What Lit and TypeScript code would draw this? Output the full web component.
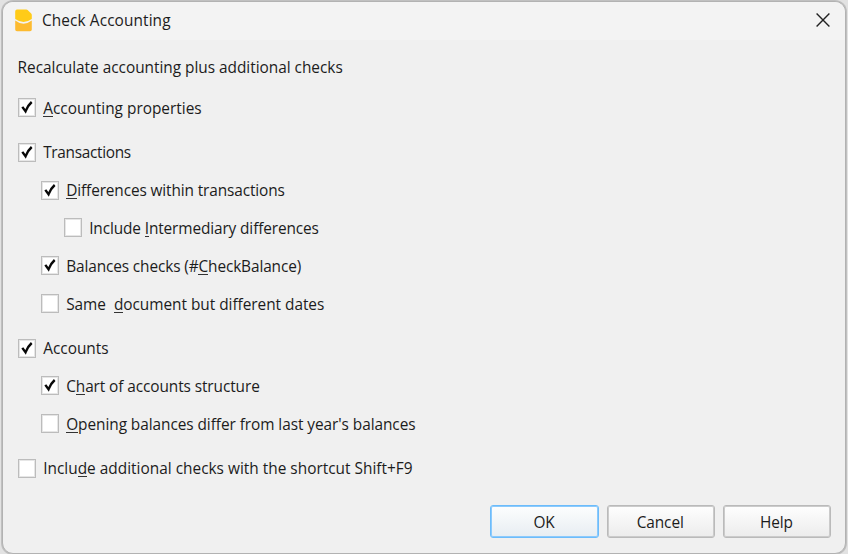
import { LitElement, html, css, svg, nothing } from "lit";
import { customElement, property } from "lit/decorators.js";
import { classMap } from "lit/directives/class-map.js";

const family = css`"Open Sans", "Noto Sans", sans-serif`;

interface Option {
  level: number;
  checked: boolean;
  before: string;
  key: string;
  after: string;
  spacing: number;
  group?: boolean;
}

const options: Option[] = [
  { level: 0, checked: true, before: "", key: "A", after: "ccounting properties", spacing: 0 },
  { level: 0, checked: true, before: "Transactions", key: "", after: "", spacing: -0.32, group: true },
  { level: 1, checked: true, before: "", key: "D", after: "ifferences within transactions", spacing: -0.12 },
  { level: 2, checked: false, before: "Include ", key: "I", after: "ntermediary differences", spacing: -0.12 },
  { level: 1, checked: true, before: "Balances checks (#", key: "C", after: "heckBalance)", spacing: -0.12 },
  { level: 1, checked: false, before: "Same  ", key: "d", after: "ocument but different dates", spacing: -0.03 },
  { level: 0, checked: true, before: "Accounts", key: "", after: "", spacing: 0, group: true },
  { level: 1, checked: true, before: "C", key: "h", after: "art of accounts structure", spacing: -0.09 },
  { level: 1, checked: false, before: "", key: "O", after: "pening balances differ from last year's balances", spacing: -0.06 },
  { level: 0, checked: false, before: "Inclu", key: "d", after: "e additional checks with the shortcut Shift+F9", spacing: 0.01, group: true },
];

@customElement("check-option")
class CheckOption extends LitElement {
  @property({ attribute: false }) option!: Option;

  static styles = css`
    :host { display: block; }
    .row { display: flex; align-items: center; height: 37.85px; font: 15.4px/20px ${family}; color: #1c1c1c; }
    .group { margin-top: 6.6px; }
    .level1 { padding-left: 23px; }
    .level2 { padding-left: 46px; }
    .box { box-sizing: border-box; width: 18px; height: 19px; flex: none; background: #fff; border: 1px solid #bcbcbc; box-shadow: inset 0 0 0 1px #e6e6e6; margin-right: 7.6px; }
    .box svg { display: block; width: 16px; height: 17px; }
    .label { white-space: pre; padding-top: 2px; }
    .key { border-bottom: 1px solid #333; display: inline-block; height: 17px; line-height: 20px; }
  `;

  render() {
    const o = this.option;
    return html`<div class=${classMap({ row: true, group: !!o.group, level1: o.level === 1, level2: o.level === 2 })}>
      <span class="box">${o.checked
        ? svg`<svg viewBox="0 0 16 17"><path d="M3.3 7.9 L6.5 12.3 C7.8 8.7 9.8 5.6 12.7 3" fill="none" stroke="#080808" stroke-width="2.4"/></svg>`
        : nothing}</span><span class="label" style="letter-spacing:${o.spacing}px">${o.before}${o.key ? html`<span class="key">${o.key}</span>` : nothing}${o.after}</span>
    </div>`;
  }
}

@customElement("app-root")
class AppRoot extends LitElement {
  static styles = css`
    :host { display: block; width: 848px; height: 554px; overflow: hidden; background: #e2e2e2; }
    .window { box-sizing: border-box; width: 844px; height: 553px; margin-left: 2px; border: 1px solid #b2b2b2; box-shadow: 0 0 0 1px #c0c0c0; border-radius: 11px; background: #f0f0f0; overflow: hidden; display: flex; flex-direction: column; font: 15.4px/20px ${family}; color: #1c1c1c; transform: translateY(1px); }
    .bar { height: 38px; flex: none; display: flex; align-items: center; padding: 0 14px 0 12px; background: #f3f3f3; }
    .logo { width: 17px; height: 23px; margin: 0 10px 2px 0; }
    .title { flex: 1; letter-spacing: .1px; }
    .close { width: 16px; height: 16px; margin-bottom: 2px; }
    .content { flex: 1; padding: 18px 15px 0 14.6px; }
    .intro { height: 20px; margin-bottom: 10.9px; letter-spacing: -.02px; }
    .buttons { display: flex; justify-content: flex-end; gap: 8px; padding: 0 14px 15px 0; }
    .button { box-sizing: border-box; width: 108.2px; height: 33px; border: 1px solid #bababa; box-shadow: inset 0 0 0 1px #cbcbcb; border-radius: 3px; background: linear-gradient(#fefefe, #ececec); font: inherit; letter-spacing: -.1px; color: inherit; padding: 2px 1px 0 0; }
    .primary { border-color: #6cbcfb; box-shadow: inset 0 0 0 1px #8ccafc; background: linear-gradient(#fdfefe, #e7edf2); }
  `;

  render() {
    return html`<div class="window">
      <div class="bar">
        <svg class="logo" viewBox="0 0 17 23">
          <path d="M2 .6H11.3Q12 .6 12.6 1.1L16.2 4.6Q16.8 5.2 16.8 6V10Q12.5 13 8.5 13T.2 10V2.4Q.2.6 2 .6Z" fill="#ffcb18"/>
          <path d="M.2 11.6Q4.5 14.8 8.5 14.8T16.8 11.6V20.4Q16.8 22.2 15 22.2H2Q.2 22.2.2 20.4Z" fill="#fdbb30"/>
        </svg>
        <span class="title">Check Accounting</span>
        <svg class="close" viewBox="0 0 16 16"><path d="M1.6 1.6 14.4 14.4M14.4 1.6 1.6 14.4" stroke="#222" stroke-width="1.4"/></svg>
      </div>
      <div class="content">
        <div class="intro">Recalculate accounting plus additional checks</div>
        ${options.map((o) => html`<check-option .option=${o}></check-option>`)}
      </div>
      <div class="buttons">
        <button class="button primary">OK</button><button class="button">Cancel</button><button class="button">Help</button>
      </div>
    </div>`;
  }
}
